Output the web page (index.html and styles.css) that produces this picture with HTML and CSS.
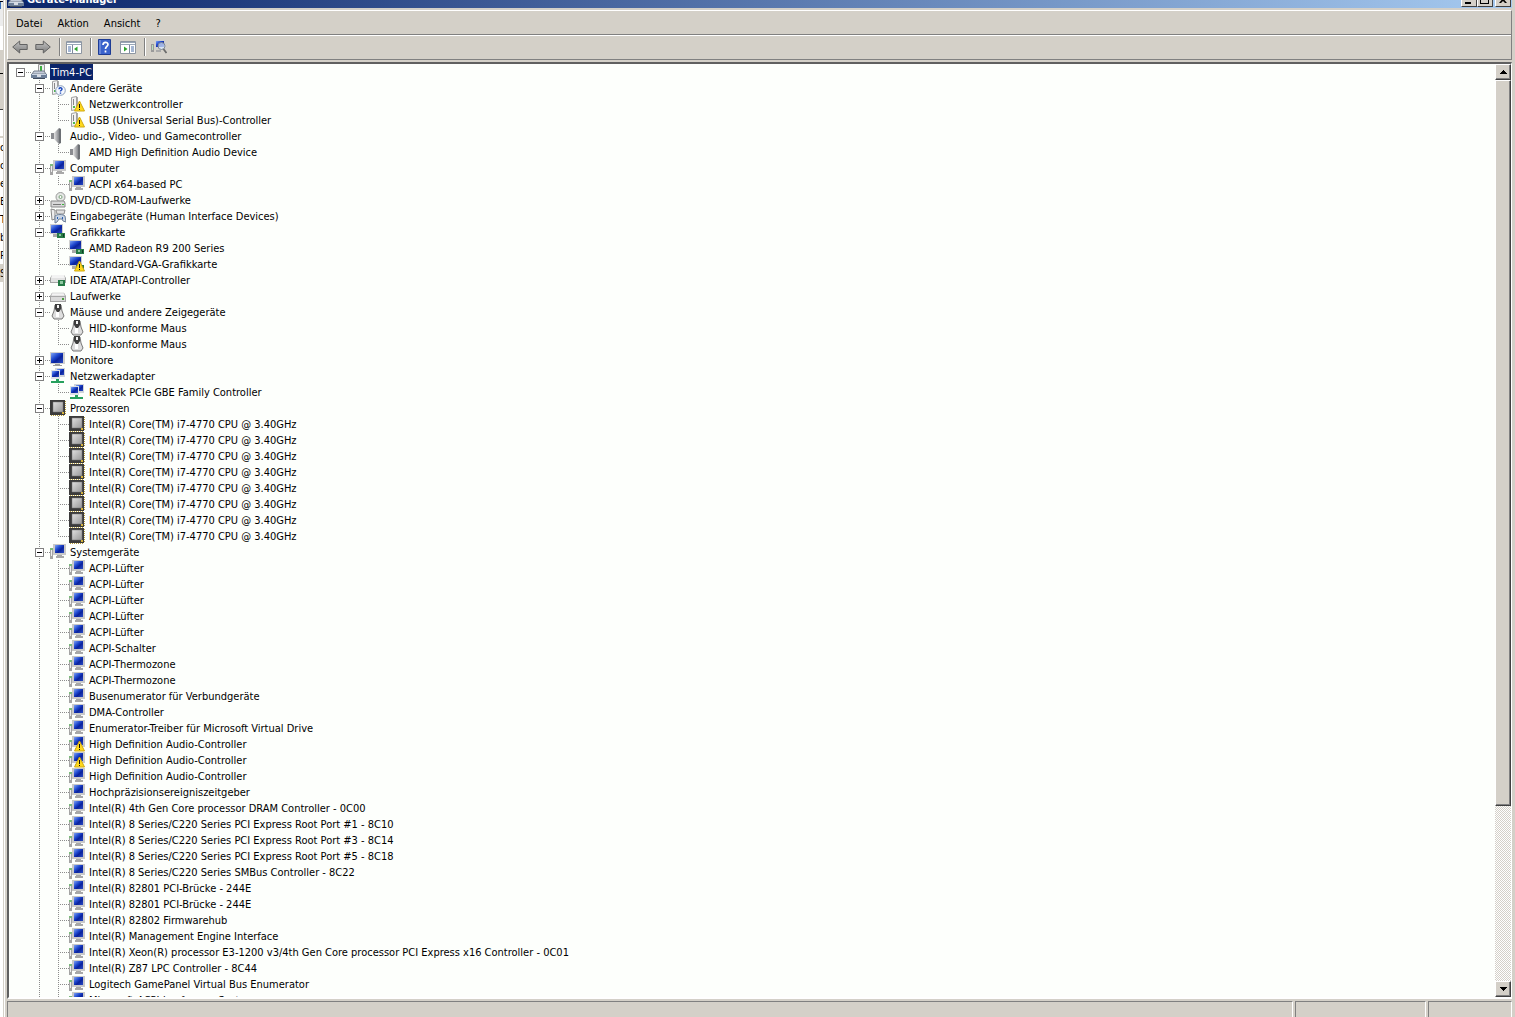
FILE: index.html
```html
<!DOCTYPE html>
<html lang="de">
<head>
<meta charset="utf-8">
<title>Geräte-Manager</title>
<link rel="stylesheet" href="styles.css">
</head>
<body>
<svg class="sprite" aria-hidden="true">
  <defs>
    <linearGradient id="screen" x1="0" y1="0" x2="1" y2="1"><stop offset="0" stop-color="#7fa4f4"/><stop offset=".4" stop-color="#1c45cc"/><stop offset=".6" stop-color="#0a229c"/><stop offset="1" stop-color="#2a4cc4"/></linearGradient>
    <linearGradient id="metal" x1="0" y1="0" x2="1" y2="0"><stop offset="0" stop-color="#e4e4e4"/><stop offset="1" stop-color="#85888c"/></linearGradient>
    <linearGradient id="chipface" x1="0" y1="0" x2="1" y2="1"><stop offset="0" stop-color="#e0e0e0"/><stop offset="1" stop-color="#989898"/></linearGradient>
    <linearGradient id="arrowfill" x1="0" y1="0" x2="0" y2="1"><stop offset="0" stop-color="#c4c4c4"/><stop offset="1" stop-color="#7c7c7c"/></linearGradient>
  </defs>
  <symbol id="root" viewBox="0 0 16 16"><path d="M7.500.5h6v8h-6z" fill="#eee" stroke="#999"/><path d="M9 2h2v5H9z" fill="#3fae3f"/><path d="M3 7h10l2 3H1z" fill="#c4ccd8" stroke="#77808e"/><path d="M0 10h16v4H0z" fill="#6e8098"/><path d="M1 10h14v1H1z" fill="#c8d4e2"/><path d="M6 10h4v3H6z" fill="#d8dde4"/><path d="M2 14h12v1H2z" fill="#3f4b5c"/></symbol>
  <symbol id="tower" viewBox="0 0 16 16"><path d="M2.500 1.500l5-1v13l-5 1z" fill="#f2f2f2" stroke="#a0a0a0"/><path d="M4 3h1v6H4z" fill="#888"/><path d="M4 10h2v2H4z" fill="#4fb84f"/><path d="M8 1h1v12H8z" fill="#aaa"/></symbol>
  <symbol id="question" viewBox="0 0 16 16"><circle cx="10.500" cy="10.500" r="4.800" fill="#f4f8ff" stroke="#8da0bb"/><path d="M9 9.300c0-2 3-2 3-.2 0 1.200-1.500 1-1.500 2.400M10.500 12.500v1.200" fill="none" stroke="#1846b8" stroke-width="1.400"/></symbol>
  <symbol id="warn" viewBox="0 0 16 16"><path d="M10.500 5l5 10h-10z" fill="#ffd91c" stroke="#d0a810" stroke-linejoin="round"/><path d="M10 8h1v4h-1zM10 13h1v1h-1z" fill="#111"/></symbol>
  <symbol id="speaker" viewBox="0 0 16 16"><path d="M1 5h3v6H1z" fill="#8a8c90"/><path d="M4 5l5-5v16l-5-5z" fill="url(#metal)"/><path d="M9 0l2 1v14l-2 1z" fill="#6c7074"/></symbol>
  <symbol id="pc" viewBox="0 0 16 16"><path d="M3 0h13v11H3z" fill="#c9c9c9"/><path d="M5 1h9v8H5z" fill="url(#screen)"/><path d="M7 11h5v1h2v2H6v-2h1z" fill="#a8a8a8"/><path d="M0 5h3v10H0z" fill="#a4a4a4"/><path d="M1 6h1v6H1z" fill="#eee"/><path d="M0 4h3v2H0z" fill="#7dbb7d"/></symbol>
  <symbol id="display" viewBox="0 0 16 16"><path d="M0 0h15v12H0z" fill="#cfcfcf"/><path d="M1 1h12v10H1z" fill="url(#screen)"/><path d="M5 12h5v1h2v1H3v-1h2z" fill="#9c9c9c"/></symbol>
  <symbol id="card" viewBox="0 0 16 16"><path d="M0 0h13v10H0z" fill="#cfcfcf"/><path d="M1 1h11v8H1z" fill="url(#screen)"/><path d="M3 10h5v3H3z" fill="#aaa"/><path d="M7 9h8v5H7z" fill="#267a46"/><path d="M9 10h2v2H9z" fill="#8fc8a2"/><path d="M13 10h1v3h-1z" fill="#113d22"/></symbol>
  <symbol id="dvd" viewBox="0 0 16 16"><circle cx="10.500" cy="5" r="4.500" fill="#e4e8e4" stroke="#9a9a9a"/><circle cx="10.500" cy="5" r="1.500" fill="#fff" stroke="#7aa27a"/><path d="M1 9h13l1 2v4H1z" fill="#d8d8d8" stroke="#888"/><path d="M3 12h8v1H3z" fill="#777"/><path d="M12 12h2v1h-2z" fill="#39b539"/></symbol>
  <symbol id="hid" viewBox="0 0 16 16"><path d="M1 1l4 1v9l-3 1z" fill="#eee" stroke="#888"/><path d="M6 2h9l-1 4H7z" fill="#e0e0e0" stroke="#8d8d8d"/><path d="M5 8c2-2 8-2 10 0l1 6-3-1-1-2H9l-2 3-2 1z" fill="#c8d4e4" stroke="#6e7f95"/><path d="M7 9h1v2H7zM12 9h1v2h-1z" fill="#2a5fb0"/></symbol>
  <symbol id="drive" viewBox="0 0 16 16"><path d="M2 5h12l2 3v6H0V8z" fill="#a4a4a4"/><path d="M2 5h12l1 3H1z" fill="#f3f3f3" stroke="#bbb" stroke-width=".5"/><path d="M1 9h14v4H1z" fill="#dadada"/><path d="M12 10h2v2h-2z" fill="#4b9c3f"/></symbol>
  <symbol id="ide" viewBox="0 0 16 16"><path d="M2 3h12l2 3v5H0V6z" fill="#a4a4a4"/><path d="M2 3h12l1 3H1z" fill="#f3f3f3"/><path d="M1 6h14v4H1z" fill="#e2e2e2"/><path d="M8 8h7v6H8z" fill="#267a46"/><path d="M10 9h3v3h-3z" fill="#8fc8a2"/></symbol>
  <symbol id="mouse" viewBox="0 0 16 16"><path d="M5 1h6l1 6 2 5-2 3H4l-2-3 2-5z" fill="#dedede" stroke="#777"/><path d="M5 0h6v5l-2 3H7L5 5z" fill="#3d3d3d"/><path d="M7 1h2v3H7z" fill="#f4f4f4"/><path d="M6 8h3v5H6z" fill="#fff"/></symbol>
  <symbol id="network" viewBox="0 0 16 16"><path d="M5 0h10v9H5z" fill="#cfd3da"/><path d="M7 1h7v6H7z" fill="url(#screen)"/><path d="M1 2h9v9H1z" fill="#dce0e6"/><path d="M2 3h7v6H2z" fill="url(#screen)"/><path d="M6 11h3v2h5v2H1v-2h5z" fill="#27a05e"/></symbol>
  <symbol id="cpu" viewBox="0 0 16 16"><path d="M0 0h15v15H0z" fill="#3b3b3b"/><path d="M1 15.500h14M15.500 1v14" stroke="#b49b3c" stroke-dasharray="1 1"/><path d="M3 2h10v10H3z" fill="url(#chipface)" stroke="#777" stroke-width=".5"/><path d="M12 12h2v2h-2z" fill="#d4b23a"/></symbol>
  <symbol id="back" viewBox="0 0 16 16"><path d="M.7 8l7-6v3.500h7.500v5H7.700V14z" fill="url(#arrowfill)" stroke="#626262"/></symbol>
  <symbol id="forward" viewBox="0 0 16 16"><path d="M15.300 8l-7-6v3.500H.8v5h7.500V14z" fill="url(#arrowfill)" stroke="#626262"/></symbol>
  <symbol id="treepane" viewBox="0 0 16 16"><path d="M.5 2.500h15v12H.5z" fill="#fff" stroke="#8d96a2"/><path d="M1 3h14v1H1zM1 5h14v1H1z" fill="#9aa7b8"/><path d="M6 6h1v8H6z" fill="#7d8a9c"/><path d="M2 8h3M2 10h3M2 12h3" stroke="#4a6fa8"/><path d="M11.500 7.500v5L8 10z" fill="#2fa52f"/></symbol>
  <symbol id="actionpane" viewBox="0 0 16 16"><path d="M.5 2.500h15v12H.5z" fill="#fff" stroke="#8d96a2"/><path d="M1 3h14v1H1zM1 5h14v1H1z" fill="#9aa7b8"/><path d="M9 6h1v8H9z" fill="#7d8a9c"/><path d="M11 8h3M11 10h3M11 12h3" stroke="#4a6fa8"/><path d="M4 7.500v5L7.500 10z" fill="#2fa52f"/></symbol>
  <symbol id="help" viewBox="0 0 16 16"><path d="M1.500.5h12v15h-12z" fill="#3a62cc" stroke="#1e3c94"/><path d="M2 1h2v14H2z" fill="#6684d8"/><path d="M6 6c0-3.500 5-3.500 5-.5C11 7.500 8.500 7.500 8.500 10M8.500 11.500v2" fill="none" stroke="#fff" stroke-width="1.700"/></symbol>
  <symbol id="scan" viewBox="0 0 16 16"><path d="M0 5h3v8H0z" fill="#9a9a9a"/><path d="M1 6h1v5H1z" fill="#b7e0b7"/><path d="M4 1h11v9H4z" fill="#cfcfcf"/><path d="M5 2h8v6H5z" fill="url(#screen)"/><path d="M5 11h5v2H5z" fill="#aaa"/><circle cx="10.500" cy="7" r="3.500" fill="#dcecff" fill-opacity=".7" stroke="#7f8894"/><path d="M12.500 10l3 4" stroke="#6b6b6b" stroke-width="1.800"/></symbol>
</svg>

<div class="desktop">
  <div class="behind" aria-hidden="true">
    <div class="behind-title">T</div>
    <div class="behind-address"></div>
    <div class="behind-tools"></div>
    <div class="behind-head"></div>
    <ul class="behind-list">
      <li>o</li><li>o</li><li>e</li><li>E</li><li>T</li><li>b</li><li>P</li><li class="current">S</li>
    </ul>
  </div>

  <main class="window">
    <header class="titlebar">
      <svg class="icon"><use href="#root"/></svg>
      <h1 class="title">Geräte-Manager</h1>
      <div class="controls">
        <button class="control" aria-label="Minimieren"><svg viewBox="0 0 14 12"><path d="M3 8h6v2H3z"/></svg></button>
        <button class="control" aria-label="Maximieren"><svg viewBox="0 0 14 12"><path d="M2 1h9v9H2zM3 3v6h7V3z" fill-rule="evenodd"/></svg></button>
        <button class="control close" aria-label="Schließen"><svg viewBox="0 0 14 12"><path d="M3 2h2l2 2 2-2h2L8 5.500 11 9H9L7 7 5 9H3l3-3.500z"/></svg></button>
      </div>
    </header>

    <div class="bars">
      <nav class="bar menubar">
        <button class="menu">Datei</button><button class="menu">Aktion</button><button class="menu">Ansicht</button><button class="menu">?</button>
      </nav>
      <div class="bar toolbar">
        <button class="tool" aria-label="Zurück"><svg class="icon"><use href="#back"/></svg></button>
        <button class="tool" aria-label="Vorwärts"><svg class="icon"><use href="#forward"/></svg></button>
        <span class="divider"></span>
        <button class="tool" aria-label="Konsolenstruktur"><svg class="icon"><use href="#treepane"/></svg></button>
        <span class="divider"></span>
        <button class="tool" aria-label="Hilfe"><svg class="icon"><use href="#help"/></svg></button>
        <button class="tool" aria-label="Aktionsbereich"><svg class="icon"><use href="#actionpane"/></svg></button>
        <span class="divider"></span>
        <button class="tool" aria-label="Nach geänderter Hardware suchen"><svg class="icon"><use href="#scan"/></svg></button>
      </div>
    </div>

    <section class="pane">
      <div class="view">
        <ul class="tree">
          <li class="node">
            <div class="row first"><button class="toggle open" aria-label="Reduzieren"></button><svg class="icon"><use href="#root"/></svg><span class="label selected">Tim4-PC</span></div>
            <ul>
              <li class="node">
                <div class="row"><button class="toggle open" aria-label="Reduzieren"></button><svg class="icon"><use href="#tower"/><use href="#question"/></svg><span class="label">Andere Geräte</span></div>
                <ul>
                  <li class="row leaf"><svg class="icon"><use href="#tower"/><use href="#warn"/></svg><span class="label">Netzwerkcontroller</span></li>
                  <li class="row leaf"><svg class="icon"><use href="#tower"/><use href="#warn"/></svg><span class="label">USB (Universal Serial Bus)-Controller</span></li>
                </ul>
              </li>
              <li class="node">
                <div class="row"><button class="toggle open" aria-label="Reduzieren"></button><svg class="icon"><use href="#speaker"/></svg><span class="label">Audio-, Video- und Gamecontroller</span></div>
                <ul>
                  <li class="row leaf"><svg class="icon"><use href="#speaker"/></svg><span class="label">AMD High Definition Audio Device</span></li>
                </ul>
              </li>
              <li class="node">
                <div class="row"><button class="toggle open" aria-label="Reduzieren"></button><svg class="icon"><use href="#pc"/></svg><span class="label">Computer</span></div>
                <ul>
                  <li class="row leaf"><svg class="icon"><use href="#pc"/></svg><span class="label">ACPI x64-based PC</span></li>
                </ul>
              </li>
              <li class="node">
                <div class="row"><button class="toggle" aria-label="Erweitern"></button><svg class="icon"><use href="#dvd"/></svg><span class="label">DVD/CD-ROM-Laufwerke</span></div>
              </li>
              <li class="node">
                <div class="row"><button class="toggle" aria-label="Erweitern"></button><svg class="icon"><use href="#hid"/></svg><span class="label">Eingabegeräte (Human Interface Devices)</span></div>
              </li>
              <li class="node">
                <div class="row"><button class="toggle open" aria-label="Reduzieren"></button><svg class="icon"><use href="#card"/></svg><span class="label">Grafikkarte</span></div>
                <ul>
                  <li class="row leaf"><svg class="icon"><use href="#card"/></svg><span class="label">AMD Radeon R9 200 Series</span></li>
                  <li class="row leaf"><svg class="icon"><use href="#card"/><use href="#warn"/></svg><span class="label">Standard-VGA-Grafikkarte</span></li>
                </ul>
              </li>
              <li class="node">
                <div class="row"><button class="toggle" aria-label="Erweitern"></button><svg class="icon"><use href="#ide"/></svg><span class="label">IDE ATA/ATAPI-Controller</span></div>
              </li>
              <li class="node">
                <div class="row"><button class="toggle" aria-label="Erweitern"></button><svg class="icon"><use href="#drive"/></svg><span class="label">Laufwerke</span></div>
              </li>
              <li class="node">
                <div class="row"><button class="toggle open" aria-label="Reduzieren"></button><svg class="icon"><use href="#mouse"/></svg><span class="label">Mäuse und andere Zeigegeräte</span></div>
                <ul>
                  <li class="row leaf"><svg class="icon"><use href="#mouse"/></svg><span class="label">HID-konforme Maus</span></li>
                  <li class="row leaf"><svg class="icon"><use href="#mouse"/></svg><span class="label">HID-konforme Maus</span></li>
                </ul>
              </li>
              <li class="node">
                <div class="row"><button class="toggle" aria-label="Erweitern"></button><svg class="icon"><use href="#display"/></svg><span class="label">Monitore</span></div>
              </li>
              <li class="node">
                <div class="row"><button class="toggle open" aria-label="Reduzieren"></button><svg class="icon"><use href="#network"/></svg><span class="label">Netzwerkadapter</span></div>
                <ul>
                  <li class="row leaf"><svg class="icon"><use href="#network"/></svg><span class="label">Realtek PCIe GBE Family Controller</span></li>
                </ul>
              </li>
              <li class="node">
                <div class="row"><button class="toggle open" aria-label="Reduzieren"></button><svg class="icon"><use href="#cpu"/></svg><span class="label">Prozessoren</span></div>
                <ul>
                  <li class="row leaf"><svg class="icon"><use href="#cpu"/></svg><span class="label">Intel(R) Core(TM) i7-4770 CPU @ 3.40GHz</span></li>
                  <li class="row leaf"><svg class="icon"><use href="#cpu"/></svg><span class="label">Intel(R) Core(TM) i7-4770 CPU @ 3.40GHz</span></li>
                  <li class="row leaf"><svg class="icon"><use href="#cpu"/></svg><span class="label">Intel(R) Core(TM) i7-4770 CPU @ 3.40GHz</span></li>
                  <li class="row leaf"><svg class="icon"><use href="#cpu"/></svg><span class="label">Intel(R) Core(TM) i7-4770 CPU @ 3.40GHz</span></li>
                  <li class="row leaf"><svg class="icon"><use href="#cpu"/></svg><span class="label">Intel(R) Core(TM) i7-4770 CPU @ 3.40GHz</span></li>
                  <li class="row leaf"><svg class="icon"><use href="#cpu"/></svg><span class="label">Intel(R) Core(TM) i7-4770 CPU @ 3.40GHz</span></li>
                  <li class="row leaf"><svg class="icon"><use href="#cpu"/></svg><span class="label">Intel(R) Core(TM) i7-4770 CPU @ 3.40GHz</span></li>
                  <li class="row leaf"><svg class="icon"><use href="#cpu"/></svg><span class="label">Intel(R) Core(TM) i7-4770 CPU @ 3.40GHz</span></li>
                </ul>
              </li>
              <li class="node">
                <div class="row"><button class="toggle open" aria-label="Reduzieren"></button><svg class="icon"><use href="#pc"/></svg><span class="label">Systemgeräte</span></div>
                <ul>
                  <li class="row leaf"><svg class="icon"><use href="#pc"/></svg><span class="label">ACPI-Lüfter</span></li>
                  <li class="row leaf"><svg class="icon"><use href="#pc"/></svg><span class="label">ACPI-Lüfter</span></li>
                  <li class="row leaf"><svg class="icon"><use href="#pc"/></svg><span class="label">ACPI-Lüfter</span></li>
                  <li class="row leaf"><svg class="icon"><use href="#pc"/></svg><span class="label">ACPI-Lüfter</span></li>
                  <li class="row leaf"><svg class="icon"><use href="#pc"/></svg><span class="label">ACPI-Lüfter</span></li>
                  <li class="row leaf"><svg class="icon"><use href="#pc"/></svg><span class="label">ACPI-Schalter</span></li>
                  <li class="row leaf"><svg class="icon"><use href="#pc"/></svg><span class="label">ACPI-Thermozone</span></li>
                  <li class="row leaf"><svg class="icon"><use href="#pc"/></svg><span class="label">ACPI-Thermozone</span></li>
                  <li class="row leaf"><svg class="icon"><use href="#pc"/></svg><span class="label">Busenumerator für Verbundgeräte</span></li>
                  <li class="row leaf"><svg class="icon"><use href="#pc"/></svg><span class="label">DMA-Controller</span></li>
                  <li class="row leaf"><svg class="icon"><use href="#pc"/></svg><span class="label">Enumerator-Treiber für Microsoft Virtual Drive</span></li>
                  <li class="row leaf"><svg class="icon"><use href="#pc"/><use href="#warn"/></svg><span class="label">High Definition Audio-Controller</span></li>
                  <li class="row leaf"><svg class="icon"><use href="#pc"/><use href="#warn"/></svg><span class="label">High Definition Audio-Controller</span></li>
                  <li class="row leaf"><svg class="icon"><use href="#pc"/></svg><span class="label">High Definition Audio-Controller</span></li>
                  <li class="row leaf"><svg class="icon"><use href="#pc"/></svg><span class="label">Hochpräzisionsereigniszeitgeber</span></li>
                  <li class="row leaf"><svg class="icon"><use href="#pc"/></svg><span class="label">Intel(R) 4th Gen Core processor DRAM Controller - 0C00</span></li>
                  <li class="row leaf"><svg class="icon"><use href="#pc"/></svg><span class="label">Intel(R) 8 Series/C220 Series PCI Express Root Port #1 - 8C10</span></li>
                  <li class="row leaf"><svg class="icon"><use href="#pc"/></svg><span class="label">Intel(R) 8 Series/C220 Series PCI Express Root Port #3 - 8C14</span></li>
                  <li class="row leaf"><svg class="icon"><use href="#pc"/></svg><span class="label">Intel(R) 8 Series/C220 Series PCI Express Root Port #5 - 8C18</span></li>
                  <li class="row leaf"><svg class="icon"><use href="#pc"/></svg><span class="label">Intel(R) 8 Series/C220 Series SMBus Controller - 8C22</span></li>
                  <li class="row leaf"><svg class="icon"><use href="#pc"/></svg><span class="label">Intel(R) 82801 PCI-Brücke - 244E</span></li>
                  <li class="row leaf"><svg class="icon"><use href="#pc"/></svg><span class="label">Intel(R) 82801 PCI-Brücke - 244E</span></li>
                  <li class="row leaf"><svg class="icon"><use href="#pc"/></svg><span class="label">Intel(R) 82802 Firmwarehub</span></li>
                  <li class="row leaf"><svg class="icon"><use href="#pc"/></svg><span class="label">Intel(R) Management Engine Interface</span></li>
                  <li class="row leaf"><svg class="icon"><use href="#pc"/></svg><span class="label">Intel(R) Xeon(R) processor E3-1200 v3/4th Gen Core processor PCI Express x16 Controller - 0C01</span></li>
                  <li class="row leaf"><svg class="icon"><use href="#pc"/></svg><span class="label">Intel(R) Z87 LPC Controller - 8C44</span></li>
                  <li class="row leaf"><svg class="icon"><use href="#pc"/></svg><span class="label">Logitech GamePanel Virtual Bus Enumerator</span></li>
                  <li class="row leaf more"><svg class="icon"><use href="#pc"/></svg><span class="label">Microsoft ACPI-konformes System</span></li>
                </ul>
              </li>
            </ul>
          </li>
        </ul>
      </div>
      <div class="scrollbar">
        <button class="arrow" aria-label="Nach oben"><svg viewBox="0 0 7 4"><path d="M3 0h1v1h1v1h1v1h1v1H0V3h1V2h1V1h1z"/></svg></button>
        <div class="track"><div class="thumb"></div></div>
        <button class="arrow" aria-label="Nach unten"><svg viewBox="0 0 7 4"><path d="M0 0h7v1H6v1H5v1H4v1H3V3H2V2H1V1H0z"/></svg></button>
      </div>
    </section>

    <footer class="status"><span class="cell wide"></span><span class="cell medium"></span><span class="cell small"></span></footer>
  </main>
</div>
</body>
</html>
```
FILE: styles.css
```css
:root {
  --face: #d4d0c8;
  --shadow: #808080;
  --dark: #404040;
  --dots: #8c8c8c;
}

* { box-sizing: border-box; }

body {
  margin: 0;
  background: var(--face);
  color: #000;
  font: 11px/16px "DejaVu Sans Condensed", "DejaVu Sans", sans-serif;
}

button {
  margin: 0;
  padding: 0;
  border: 0;
  background: none;
  color: inherit;
  font: inherit;
}

ul { margin: 0; padding: 0; list-style: none; }

.sprite { display: block; width: 0; height: 0; }
.icon { display: block; flex: none; width: 16px; height: 16px; }

.desktop { display: flex; height: 100vh; overflow: hidden; }

/* Sliver of the window that lies behind */
.behind {
  flex: none;
  width: 4px;
  overflow: hidden;
  border-right: 1px solid var(--face);
  background: #fff;
}
.behind-title { height: 26px; line-height: 12px; text-indent: -3px; background: #ececec; }
.behind-address { height: 24px; background: #fff; }
.behind-tools { height: 60px; border-bottom: 1px solid var(--dark); background: linear-gradient(#000, #000) 0 23px / 3px 1px no-repeat var(--face); }
.behind-head { height: 28px; border-bottom: 2px solid var(--face); }
.behind-list li { height: 18px; line-height: 20px; }
.behind-list .current { background: var(--face); }

.window {
  flex: 1;
  min-width: 0;
  display: flex;
  flex-direction: column;
  padding: 0 3px 0 2px;
  border-left: 1px solid #fff;
  background: var(--face);
}

/* Title bar: only its lower edge is on screen */
.titlebar {
  flex: none;
  display: flex;
  align-items: flex-end;
  height: 8px;
  overflow: hidden;
  gap: 3px;
  padding: 0 1px;
  background: linear-gradient(to right, #0a246a, #a6caf0);
}
.title {
  flex: 1;
  margin: 0;
  color: #fff;
  font-size: 11px;
  line-height: 16px;
  font-weight: bold;
}
.controls { display: flex; padding-bottom: 1px; }
.control {
  width: 16px;
  height: 14px;
  border: 1px solid;
  border-color: #fff var(--dark) var(--dark) #fff;
  background: var(--face);
}
.control svg { display: block; width: 14px; height: 12px; }
.close { margin-left: 2px; }

.bars { flex: none; margin: 2px 0; border: 1px solid; border-color: #fff var(--shadow) var(--shadow) #fff; }
.bar { display: flex; align-items: center; height: 24px; padding-left: 4px; }
.menubar { gap: 15px; padding: 2px 0 0 8px; border-bottom: 1px solid var(--shadow); }
.toolbar { padding-bottom: 2px; border-top: 1px solid #fff; }
.tool { width: 23px; height: 20px; }
.divider { width: 2px; height: 18px; margin: 0 5px 0 1px; border-left: 1px solid var(--shadow); border-right: 1px solid #fff; }

.pane {
  flex: 1;
  min-height: 0;
  display: flex;
  border: 2px solid;
  border-color: #606060 #fff #fff #606060;
  border-right-width: 1px;
  background: #fdfffc;
}
.view { flex: 1; min-width: 0; overflow: hidden; }

/* Device tree */
.tree { padding-left: 2px; }
.tree ul { padding-left: 19px; }
.row {
  display: flex;
  align-items: center;
  height: 16px;
  white-space: nowrap;
  background: repeating-linear-gradient(to right, var(--dots) 0 1px, transparent 1px 2px) 9px 8px / 11px 1px no-repeat;
}
.toggle {
  flex: none;
  width: 9px;
  height: 9px;
  margin: 0 6px 0 5px;
  border: 1px solid var(--shadow);
  background:
    linear-gradient(#000, #000) 1px 3px / 5px 1px no-repeat,
    linear-gradient(#000, #000) 3px 1px / 1px 5px no-repeat,
    #fff;
}
.toggle.open { background: linear-gradient(#000, #000) 1px 3px / 5px 1px no-repeat, #fff; }
.tree ul > .node { background: repeating-linear-gradient(to bottom, var(--dots) 0 1px, transparent 1px 2px) 9px 0 / 1px 100% no-repeat; }
.leaf {
  padding-left: 20px;
  background:
    repeating-linear-gradient(to right, var(--dots) 0 1px, transparent 1px 2px) 9px 8px / 11px 1px no-repeat,
    repeating-linear-gradient(to bottom, var(--dots) 0 1px, transparent 1px 2px) 9px 0 / 1px 16px no-repeat;
}
.leaf:last-child:not(.more) { background-size: 11px 1px, 1px 8px; }
.label { margin-left: 2px; padding: 2px 2px 0; line-height: 14px; }
.selected { margin-left: 3px; padding: 2px 1px 0; background: #0a246a; color: #fff; }

/* Scroll bar */
.scrollbar { flex: none; display: flex; flex-direction: column; width: 16px; }
.arrow, .thumb {
  border: 1px solid;
  border-color: #fff var(--dark) var(--dark) #fff;
  background: var(--face);
  box-shadow: inset -1px -1px var(--shadow);
}
.arrow { flex: none; display: grid; place-items: center; height: 16px; }
.arrow svg { width: 7px; height: 4px; }
.track { flex: 1; background: repeating-conic-gradient(var(--face) 0 25%, #fff 0 50%) 0 0 / 2px 2px; }
.thumb { height: calc(100% * 29 / 36); }

.status { flex: none; display: flex; gap: 2px; height: 18px; padding-top: 2px; }
.cell { border: 1px solid; border-color: var(--shadow) #fff transparent var(--shadow); border-bottom: 0; }
.wide { flex: 1; }
.medium { width: 131px; }
.small { width: 84px; }
```
